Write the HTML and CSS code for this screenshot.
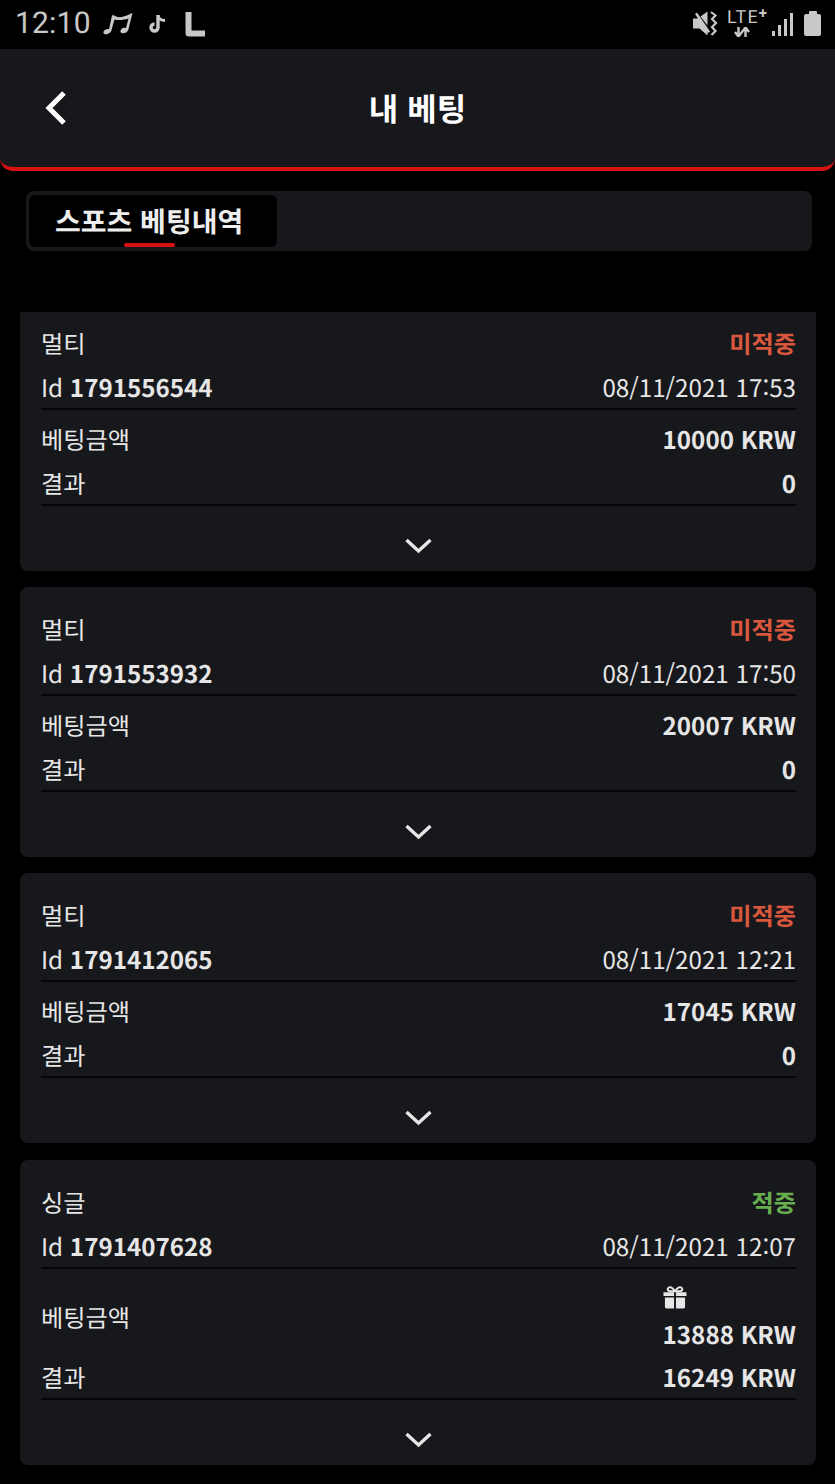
FILE: index.html
```html
<!DOCTYPE html>
<html lang="ko">
<head>
<meta charset="utf-8">
<title>내 베팅</title>
<link rel="stylesheet" href="styles.css">
</head>
<body>
<div class="status">
  <div class="status-left">
    <span class="time">12:10</span>
    <svg class="ic-music" viewBox="0 0 30 24"><path d="M9 3.500 L10.500 3 C14 6 19 6 27 2 L29.500 1 L25.500 17 C25 20.500 21 22 18.500 21 C16.500 20 17.500 17 20 16 C21 15.600 22 15.600 23 16 L25.500 6.500 C21 8 16 8.500 11.500 7.500 L8.500 18 C8 21 4 23 1.500 22 C-0.500 21 0.500 18.500 3 17.500 C4 17 5 17 6 17.300 Z" fill="#c8c8c8"/></svg>
    <svg class="ic-tiktok" viewBox="0 0 18 20"><path d="M10 1 V13.500 A3.500 3.500 0 1 1 6.500 10" fill="none" stroke="#c8c8c8" stroke-width="3.400"/><path d="M10 1.500 C10.800 5 13 6.500 17 6.500" fill="none" stroke="#c8c8c8" stroke-width="3"/></svg>
    <svg class="ic-l" viewBox="0 0 20 26"><path d="M0.500 1 H6.500 V19.500 H20 V25.500 H4 Q0.500 25.500 0.500 22 Z" fill="#c8c8c8"/></svg>
  </div>
  <div class="status-right">
    <svg class="ic-mute" viewBox="0 0 25 25"><path d="M0 7.500 H5 L2 3 L4 1.500 L17 20.500 L15 22 L14.500 21 V24.500 L6.500 17.500 H0 Z M7.500 5.500 L14.500 0.500 V14.500 Z" fill="#c8c8c8"/><path d="M18 1 L22.500 4.500 L19 8 L23 12 L19 16 L22.500 20 L18.500 24" fill="none" stroke="#c8c8c8" stroke-width="2.200"/></svg>
    <div class="lte"><span class="lte-text">LTE<sup class="lte-plus">+</sup></span>
      <svg class="ic-arrows" viewBox="0 0 16 10"><path d="M4.500 0 V7 M1 5 L4.500 9.500 L8 5 M11.500 10 V3 M8 5 L11.500 0.500 L15 5" fill="none" stroke="#c8c8c8" stroke-width="2.400"/></svg>
    </div>
    <div class="signal"><i class="b1"></i><i class="b2"></i><i class="b3"></i><i class="b4"></i></div>
    <div class="battery"><i class="cap"></i><i class="cell"></i></div>
  </div>
</div>

<header class="topbar">
  <svg class="back" viewBox="0 0 24 36"><path d="M20 3 L5 18 L20 33" fill="none" stroke="#fff" stroke-width="5"/></svg>
  <h1 class="title">내 베팅</h1>
</header>

<nav class="tabs">
  <div class="tab">스포츠 베팅내역<span class="tab-mark"></span></div>
</nav>

<main class="list">
  <section class="card card-first">
    <div class="row row-top"><span>멀티</span><b class="lost">미적중</b></div>
    <div class="row row-line"><span>Id <b>1791556544</b></span><span>08/11/2021 17:53</span></div>
    <div class="row row-gap"><span>베팅금액</span><b>10000 KRW</b></div>
    <div class="row row-line"><span>결과</span><b>0</b></div>
    <div class="more"><svg class="chev" viewBox="0 0 28 18"><path d="M1.500 3 L13.500 14 L25.500 3" fill="none" stroke="#e6e6e6" stroke-width="3.400"/></svg></div>
  </section>

  <section class="card">
    <div class="row row-top"><span>멀티</span><b class="lost">미적중</b></div>
    <div class="row row-line"><span>Id <b>1791553932</b></span><span>08/11/2021 17:50</span></div>
    <div class="row row-gap"><span>베팅금액</span><b>20007 KRW</b></div>
    <div class="row row-line"><span>결과</span><b>0</b></div>
    <div class="more"><svg class="chev" viewBox="0 0 28 18"><path d="M1.500 3 L13.500 14 L25.500 3" fill="none" stroke="#e6e6e6" stroke-width="3.400"/></svg></div>
  </section>

  <section class="card">
    <div class="row row-top"><span>멀티</span><b class="lost">미적중</b></div>
    <div class="row row-line"><span>Id <b>1791412065</b></span><span>08/11/2021 12:21</span></div>
    <div class="row row-gap"><span>베팅금액</span><b>17045 KRW</b></div>
    <div class="row row-line"><span>결과</span><b>0</b></div>
    <div class="more"><svg class="chev" viewBox="0 0 28 18"><path d="M1.500 3 L13.500 14 L25.500 3" fill="none" stroke="#e6e6e6" stroke-width="3.400"/></svg></div>
  </section>

  <section class="card">
    <div class="row row-top"><span>싱글</span><b class="won">적중</b></div>
    <div class="row row-line"><span>Id <b>1791407628</b></span><span>08/11/2021 12:07</span></div>
    <div class="row row-bonus"><span>베팅금액</span>
      <div class="bonus">
        <svg class="gift" viewBox="0 0 24 24"><path d="M0 6.500 H11 V10.500 H0 Z M13 6.500 H24 V10.500 H13 Z M1.500 12 H11 V23.500 H3 Q1.500 23.500 1.500 22 Z M13 12 H22.500 V22 Q22.500 23.500 21 23.500 H13 Z" fill="#e6e6e6"/><path d="M12 5.500 C9 1 6.500 0.500 5 2 C3.500 3.500 5 5.500 7 5.500 Z M12 5.500 C15 1 17.500 0.500 19 2 C20.500 3.500 19 5.500 17 5.500 Z" fill="none" stroke="#e6e6e6" stroke-width="2"/></svg>
        <b>13888 KRW</b>
      </div>
    </div>
    <div class="row row-line"><span>결과</span><b>16249 KRW</b></div>
    <div class="more"><svg class="chev" viewBox="0 0 28 18"><path d="M1.500 3 L13.500 14 L25.500 3" fill="none" stroke="#e6e6e6" stroke-width="3.400"/></svg></div>
  </section>
</main>
</body>
</html>
```

FILE: styles.css
```css
* { box-sizing: border-box; }
html, body { margin: 0; padding: 0; }
body {
  width: 835px;
  background: #000;
  color: #e6e6e6;
  font-family: "Noto Sans CJK KR", "Noto Sans", sans-serif;
  font-size: 24.2px;
  text-rendering: geometricPrecision;
}

/* status bar */
.status {
  height: 49px;
  padding: 0 14px 2px 15px;
  display: flex;
  align-items: center;
  justify-content: space-between;
}
.status-left, .status-right { display: flex; align-items: center; }
.time {
  font-family: Roboto, sans-serif;
  font-size: 30px;
  line-height: 1;
  letter-spacing: 0.2px;
  color: #c8c8c8;
}
.ic-music { width: 30px; height: 24px; margin-left: 12px; }
.ic-tiktok { width: 18px; height: 20px; margin-left: 15px; }
.ic-l { width: 20px; height: 26px; margin-left: 19px; }
.ic-mute { width: 25px; height: 25px; }
.lte { width: 38px; margin-left: 9px; display: flex; flex-direction: column; align-items: flex-start; }
.lte-text {
  font-family: Roboto, sans-serif;
  font-size: 18px;
  line-height: 15px;
  letter-spacing: 1.2px;
  color: #c8c8c8;
  white-space: nowrap;
}
.lte-plus { font-size: 15px; line-height: 0; vertical-align: 5px; font-weight: 700; letter-spacing: 0; }
.ic-arrows { width: 16px; height: 10px; margin: 2px 0 0 7px; }
.signal { display: flex; align-items: flex-end; gap: 3px; margin-left: 7px; margin-top: 1px; }
.signal i { display: block; width: 3px; background: #c8c8c8; }
.signal .b1 { height: 5px; }
.signal .b2 { height: 11px; }
.signal .b3 { height: 17px; }
.signal .b4 { height: 23px; }
.battery { margin-left: 11px; display: flex; flex-direction: column; align-items: center; }
.battery .cap { display: block; width: 8px; height: 3px; background: #c8c8c8; border-radius: 1px 1px 0 0; }
.battery .cell { display: block; width: 17px; height: 22px; background: #c8c8c8; border-radius: 2px; }

/* header */
.topbar {
  height: 122px;
  background: #17181c;
  border-bottom: 4px solid #d81212;
  border-radius: 0 0 13px 13px;
  display: flex;
  align-items: center;
  justify-content: center;
  position: relative;
}
.back { position: absolute; left: 44px; top: 41px; width: 24px; height: 36px; }
.title {
  margin: 0;
  font-size: 32px;
  line-height: 44px;
  font-weight: 700;
  color: #fff;
}

/* tabs */
.tabs {
  margin: 20px 23px 0 26px;
  height: 60px;
  background: #17181c;
  border-radius: 8px;
  padding: 4px 4px 4px 3px;
}
.tab {
  position: relative;
  width: 248px;
  height: 52px;
  background: #000;
  border-radius: 6px;
  padding-left: 26px;
  font-size: 28px;
  line-height: 52px;
  font-weight: 700;
  color: #eee;
  white-space: nowrap;
}
.tab-mark {
  position: absolute;
  left: 95px;
  top: 48px;
  width: 51px;
  height: 4px;
  background: #d81212;
  border-radius: 2px;
}

/* cards */
.list {
  margin: 61px 19px 0 20px;
  display: flex;
  flex-direction: column;
  gap: 16px;
}
.card {
  background: #17181c;
  border-radius: 8px;
  padding: 20px 20px 0 21px;
  height: 270px;
}
.card-first {
  padding-top: 9px;
  height: 259px;
  border-radius: 0 0 8px 8px;
}
.card:last-child { height: 305px; margin-top: 1px; }
.row {
  display: flex;
  justify-content: space-between;
  align-items: center;
  height: 44px;
  line-height: 44px;
  white-space: nowrap;
}
.row-top, .row-gap {
  height: 45px;
  align-items: flex-start;
}
.row-line {
  border-bottom: 2px solid #050506;
}
.row-gap { margin-top: 7px; }
.row-bonus { height: 79px; margin-top: 8px; }
.bonus { display: flex; flex-direction: column; height: 79px; }
.gift { width: 24px; height: 24px; margin-top: 9px; margin-bottom: 3px; }
.bonus b { line-height: 44px; }
b { font-weight: 700; }
.lost { color: #d8573d; }
.won { color: #68ad4e; }
.more {
  display: flex;
  justify-content: center;
  padding-top: 31px;
}
.chev { width: 28px; height: 18px; display: block; }
```
